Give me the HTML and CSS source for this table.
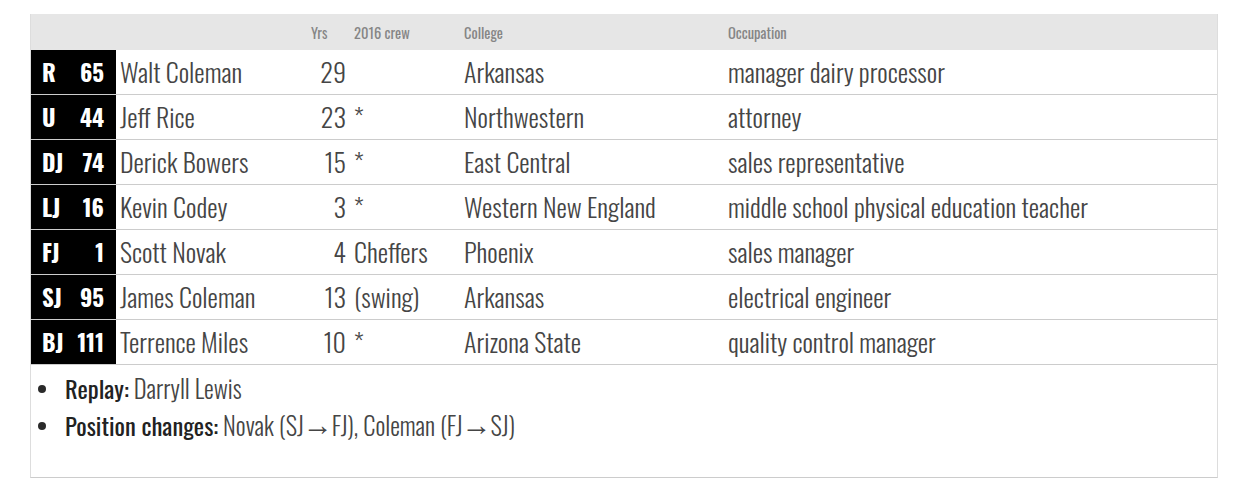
FILE: index.html
```html
<!DOCTYPE html>
<html lang="en">
<head>
<meta charset="utf-8">
<title>Crew</title>
<link rel="stylesheet" href="styles.css">
</head>
<body>
<div class="crew">
  <table class="crew-table">
    <colgroup>
      <col class="c-pos"><col class="c-num"><col class="c-name"><col class="c-yrs"><col class="c-crew"><col class="c-college"><col class="c-occ">
    </colgroup>
    <thead>
      <tr>
        <th></th><th></th><th></th><th class="yrs-h">Yrs</th><th>2016 crew</th><th>College</th><th>Occupation</th>
      </tr>
    </thead>
    <tbody>
      <tr><td class="pos">R</td><td class="num">65</td><td class="name">Walt Coleman</td><td class="yrs">29</td><td class="prev"></td><td>Arkansas</td><td>manager dairy processor</td></tr>
      <tr><td class="pos">U</td><td class="num">44</td><td class="name">Jeff Rice</td><td class="yrs">23</td><td class="prev">*</td><td>Northwestern</td><td>attorney</td></tr>
      <tr><td class="pos">DJ</td><td class="num">74</td><td class="name">Derick Bowers</td><td class="yrs">15</td><td class="prev">*</td><td>East Central</td><td>sales representative</td></tr>
      <tr><td class="pos">LJ</td><td class="num">16</td><td class="name">Kevin Codey</td><td class="yrs">3</td><td class="prev">*</td><td>Western New England</td><td>middle school physical education teacher</td></tr>
      <tr><td class="pos">FJ</td><td class="num">1</td><td class="name">Scott Novak</td><td class="yrs">4</td><td class="prev">Cheffers</td><td>Phoenix</td><td>sales manager</td></tr>
      <tr><td class="pos">SJ</td><td class="num">95</td><td class="name">James Coleman</td><td class="yrs">13</td><td class="prev">(swing)</td><td>Arkansas</td><td>electrical engineer</td></tr>
      <tr><td class="pos">BJ</td><td class="num">111</td><td class="name">Terrence Miles</td><td class="yrs">10</td><td class="prev">*</td><td>Arizona State</td><td>quality control manager</td></tr>
    </tbody>
  </table>
  <ul class="notes">
    <li><strong>Replay:</strong> Darryll Lewis</li>
    <li><strong>Position changes:</strong> Novak (SJ<span class="arr">→</span>FJ), Coleman (FJ<span class="arr">→</span>SJ)</li>
  </ul>
</div>
</body>
</html>
```
FILE: styles.css
```css
html, body {
  margin: 0;
  padding: 0;
  background: #fff;
}

body {
  font-family: Oswald, "Roboto Condensed", "Liberation Sans Narrow", sans-serif;
  color: #454545;
}

.crew {
  margin: 14px 0 0 30px;
  width: 1188px;
  box-sizing: border-box;
  border: 1px solid #ddd;
  border-top: 0;
  border-bottom-color: #ccc;
}

.crew-table {
  width: 100%;
  table-layout: fixed;
  border-collapse: separate;
  border-spacing: 0;
}

.c-pos { width: 42px; }
.c-num { width: 43px; }
.c-name { width: 191px; }
.c-yrs { width: 43px; }
.c-crew { width: 110px; }
.c-college { width: 264px; }

.crew-table thead th {
  background: #e6e6e6;
  height: 36px;
  padding: 0 0 0 4px;
  text-align: left;
  font-size: 14.5px;
  font-weight: 400;
  color: #858585;
  vertical-align: middle;
  white-space: nowrap;
}

.crew-table td {
  height: 44px;
  padding: 0 0 0 4px;
  border-bottom: 1px solid #ccc;
  font-size: 26px;
  font-weight: 300;
  line-height: 1;
  vertical-align: middle;
  white-space: nowrap;
  color: #454545;
}

.crew-table td.pos,
.crew-table td.num {
  background: #000;
  color: #fff;
  font-weight: 700;
  font-size: 23px;
}

.crew-table td.pos {
  padding-left: 11px;
}

.crew-table td.num {
  padding: 0 12px 0 0;
  text-align: right;
}

.crew-table td.yrs {
  text-align: right;
  padding: 0 4px 0 0;
}

.crew-table td.prev {
  padding-left: 4px;
}

.notes {
  margin: 0;
  padding: 5px 0 33px 7px;
  list-style: none;
  font-size: 24.5px;
  font-weight: 300;
  line-height: 37px;
  color: #454545;
}

.notes li::before {
  content: "";
  display: inline-block;
  width: 8px;
  height: 8px;
  border-radius: 50%;
  background: #2a2a2a;
  margin-right: 19px;
  vertical-align: 6px;
}

.notes strong {
  font-weight: 400;
  color: #222;
}

.arr {
  font-family: "Liberation Sans", sans-serif;
  font-weight: 400;
  font-size: 30px;
  line-height: 0;
  margin: 0 -1px;
  vertical-align: 1px;
}
```
